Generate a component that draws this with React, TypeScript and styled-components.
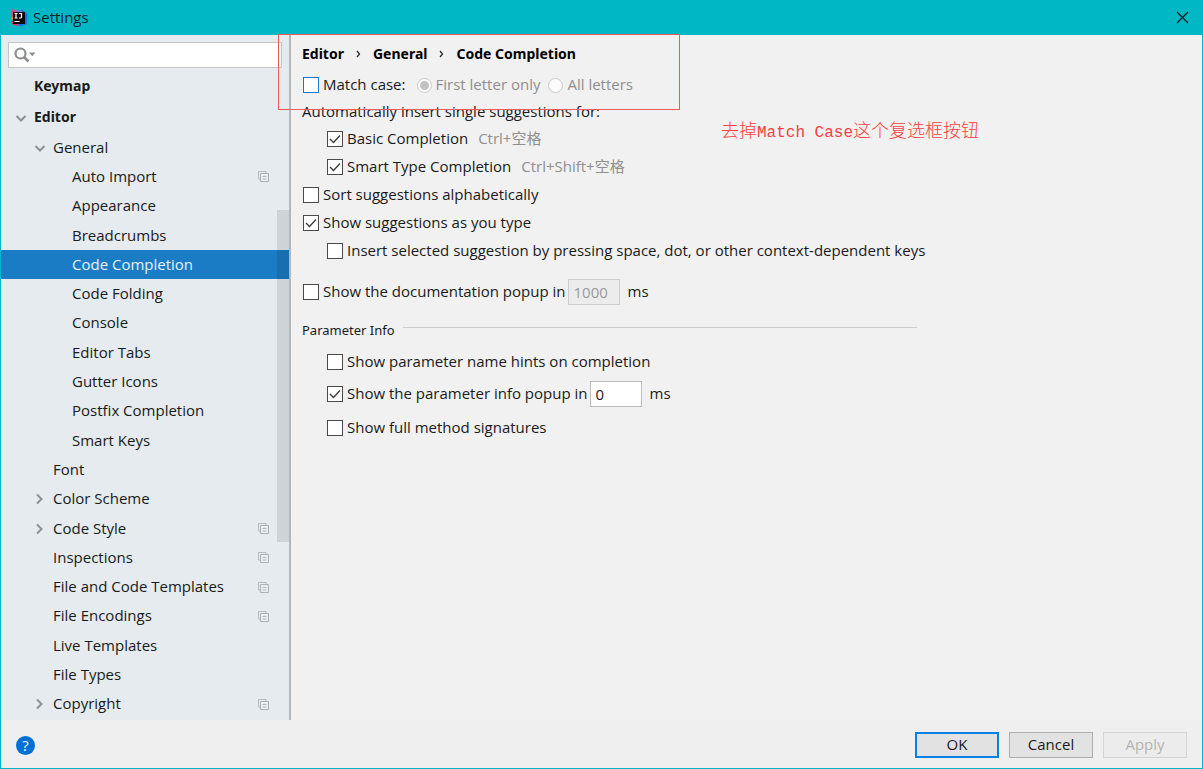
import React from "react";
import styled, { createGlobalStyle, css } from "styled-components";

const GlobalStyle = createGlobalStyle`
  *, *::before, *::after { box-sizing: border-box; }
  body {
    margin: 0;
    font-family: "Open Sans", "Noto Sans CJK SC", sans-serif;
    font-size: 15px;
    line-height: 20px;
    color: #1a1a1a;
  }
  input, button { font: inherit; color: inherit; margin: 0; }
`;

const Dialog = styled.div`
  display: flex;
  flex-direction: column;
  min-height: 100vh;
  border: 1px solid #00b7c6;
  border-top: 0;
  background: #f1f1f1;
`;

const TitleBar = styled.header`
  display: flex;
  align-items: center;
  gap: 5px;
  height: 35px;
  padding: 0 13px 0 9px;
  background: #00b7c6;
  color: #0a2226;
`;

const Title = styled.h1`
  flex: 1;
  margin: 0;
  padding-bottom: 2px;
  font-size: 15px;
  font-weight: 400;
`;

const CloseButton = styled.button`
  display: flex;
  padding: 0;
  border: 0;
  background: none;
`;

const Body = styled.div`
  display: flex;
  flex: 1;
`;

const Sidebar = styled.aside`
  position: relative;
  display: flex;
  flex-direction: column;
  flex: 0 0 290px;
  border-right: 2px solid #b4b7ba;
  background: #e5ebef;
`;

const SearchBox = styled.label`
  display: flex;
  align-items: center;
  height: 26px;
  margin: 7px 7px 3px;
  padding: 0 5px;
  border: 1px solid #c3c6c9;
  background: #fff;
`;

const SearchInput = styled.input`
  flex: 1;
  min-width: 0;
  border: 0;
  outline: 0;
  background: none;
`;

const Tree = styled.ul`
  display: flex;
  flex-direction: column;
  flex: 1;
  margin: 0;
  padding: 0 0 1px;
  list-style: none;
`;

const depthPadding = [12, 31, 50];

const TreeRow = styled.li<{ $depth: number; $selected?: boolean; $top?: boolean }>`
  display: flex;
  align-items: center;
  flex: 1 1 29px;
  padding: 0 20px 0 ${(p) => depthPadding[p.$depth]}px;
  ${(p) =>
    p.$top &&
    css`
      flex: 0 0 31px;
      font-family: "Noto Sans", sans-serif;
      font-size: 14px;
      font-weight: 700;
    `}
  ${(p) =>
    p.$selected &&
    css`
      background: #1a7cc4;
      color: #e8f2fa;
    `}
`;

const ArrowSlot = styled.span`
  display: flex;
  flex: 0 0 21px;
  padding-left: 2px;
`;

const RowLabel = styled.span`
  flex: 1;
  padding-bottom: 2px;
`;

const ScrollThumb = styled.div`
  position: absolute;
  top: 175px;
  right: 0;
  width: 12px;
  height: 332px;
  background: rgba(0, 0, 0, 0.1);
`;

const Content = styled.main`
  position: relative;
  flex: 1;
  padding: 1px 11px 16px;
`;

const Breadcrumbs = styled.nav`
  display: flex;
  align-items: center;
  gap: 12px;
  height: 36px;
  font-family: "Noto Sans", sans-serif;
  font-size: 14px;
  font-weight: 700;
  color: #000;
`;

const Intro = styled.p`
  margin: 0;
  line-height: 27px;
`;

const OptionRow = styled.div<{ $indent?: boolean; $gap?: number; $tight?: boolean }>`
  display: flex;
  align-items: center;
  height: ${(p) => (p.$tight ? 26 : 28)}px;
  margin-top: ${(p) => p.$gap ?? 0}px;
  padding-left: ${(p) => (p.$indent ? 25 : 1)}px;
`;

const OptionLabel = styled.label<{ $muted?: boolean }>`
  display: flex;
  align-items: center;
  gap: 4px;
  color: ${(p) => (p.$muted ? "#8f8f8f" : "inherit")};
`;

const OptionText = styled.span`
  padding-bottom: 2px;
`;

const Shortcut = styled.span`
  margin-left: 10px;
  padding-bottom: 2px;
  color: #8f8f8f;
`;

const BoxFrame = styled.span`
  display: grid;
  width: 16px;
  height: 16px;

  > * { grid-area: 1 / 1; }
  > svg { pointer-events: none; }
`;

const BoxInput = styled.input<{ $active?: boolean }>`
  appearance: none;
  width: 16px;
  height: 16px;
  border: 1px solid ${(p) => (p.$active ? "#0f7bd6" : "#4a4a4a")};
  background: #fff;
`;

const RadioInput = styled.input`
  appearance: none;
  width: 15px;
  height: 15px;
  border: 1px solid #cbcbcb;
  border-radius: 50%;
  background: #fbfbfb;

  &:checked { background: radial-gradient(circle, #c2c2c2 0 4px, #fbfbfb 5px); }
`;

const RadioGroup = styled.div`
  display: flex;
  gap: 8px;
  margin-left: 11px;
`;

const DelayInput = styled.input`
  width: 52px;
  height: 26px;
  margin: 0 8px 0 2px;
  padding: 0 5px 1px;
  border: 1px solid #bdbdbd;
  background: #fff;

  &:disabled {
    border-color: #cdcdcd;
    background: #ececec;
    color: #9a9a9a;
  }
`;

const SectionHeading = styled.h2`
  display: flex;
  align-items: center;
  gap: 8px;
  max-width: 615px;
  height: 28px;
  margin: 10px 0 4px;
  font-family: "Noto Sans", sans-serif;
  font-size: 13px;
  font-weight: 400;

  &::after {
    content: "";
    flex: 1;
    height: 1px;
    margin-bottom: 5px;
    background: #cfcfcf;
  }
`;

const Highlight = styled.div`
  position: absolute;
  top: -1px;
  left: -13px;
  width: 402px;
  height: 76px;
  border: 1px solid #ee5a5c;
  pointer-events: none;
`;

const Note = styled.p`
  position: absolute;
  top: 82px;
  left: 430px;
  margin: 0;
  font: 300 18px/24px "Noto Sans CJK SC", sans-serif;
  color: #f63f40;
  white-space: nowrap;
`;

const NoteCode = styled.span`
  font-family: "Liberation Mono", monospace;
  font-size: 16px;
  font-weight: 400;
`;

const Footer = styled.footer`
  display: flex;
  align-items: center;
  gap: 10px;
  height: 48px;
  padding: 2px 15px 0;
  background: #efefef;
`;

const HelpButton = styled.button`
  width: 19px;
  height: 19px;
  margin-right: auto;
  padding: 0;
  border: 0;
  border-radius: 50%;
  background: #0070d6;
  color: #fff;
  line-height: 19px;
`;

const FooterButton = styled.button<{ $primary?: boolean }>`
  width: 84px;
  height: 26px;
  padding: 0 0 2px;
  border: ${(p) => (p.$primary ? "2px solid #0a80e0" : "1px solid #adadad")};
  background: #e2e2e2;
  line-height: 20px;

  &:disabled {
    border-color: #d4d4d4;
    background: #ececec;
    color: #b4b4b4;
  }
`;

const AppIcon = () => (
  <svg width="18" height="18" viewBox="0 0 18 18" aria-hidden="true">
    <path d="M1.500 0L8 2 7 10 1.500 8z" fill="#e8436b" />
    <path d="M0.500 9L5 7v6z" fill="#fb8a2a" />
    <path d="M1 12l5-1 4 6-7-1z" fill="#d9356c" />
    <path d="M8 3l4-2.500L17.500 5l-.5 10-6 2.500-3-2z" fill="#1477e8" />
    <path d="M5 1l3 1 3-1 2 3H4z" fill="#8a6fc0" />
    <rect x="3" y="3" width="12" height="12" fill="#10070c" />
    <path
      d="M4.500 4.500h3M6 4.500v4.500M4.500 9h3M9 4.500h2.500v3.500q0 1-1 1H9M4.500 12.500h5"
      fill="none"
      stroke="#fff"
      strokeWidth="1.200"
    />
  </svg>
);

const CloseIcon = () => (
  <svg width="13" height="13" viewBox="0 0 13 13" aria-hidden="true">
    <path d="M1 1l11 11M12 1L1 12" stroke="#04191b" strokeWidth="1.200" />
  </svg>
);

const SearchIcon = () => (
  <svg width="23" height="16" viewBox="0 0 23 16" aria-hidden="true">
    <circle cx="6.500" cy="6.500" r="5" fill="none" stroke="#8b8d8f" strokeWidth="2.200" />
    <path d="M10 10l4.500 4.500" stroke="#8b8d8f" strokeWidth="2.600" />
    <path d="M15 5.500h6.500l-3.250 3.800z" fill="#8b8d8f" />
  </svg>
);

const CrumbIcon = () => (
  <svg width="5" height="8" viewBox="0 0 5 8" aria-hidden="true">
    <path d="M1 1l2.500 3L1 7" fill="none" stroke="#222" strokeWidth="1.200" />
  </svg>
);

const Arrow = ({ open }: { open?: boolean }) => (
  <svg width="12" height="12" viewBox="0 0 12 12" aria-hidden="true">
    <path
      d={open ? "M1.500 4L6 8.500l4.500-4.500" : "M3 1.500l4.500 4.500-4.500 4.500"}
      fill="none"
      stroke="#8e9194"
      strokeWidth="2"
    />
  </svg>
);

const CopyIcon = () => (
  <svg width="11" height="11" viewBox="0 0 11 11" aria-hidden="true">
    <path d="M2 8H.5V.5H8V2" fill="none" stroke="#b3bac0" />
    <path d="M2.500 2.500h8v8h-8z" fill="#e9eef1" stroke="#a9b1b7" />
    <path d="M4.500 5.500h4M4.500 8h4" stroke="#b3bac0" />
  </svg>
);

type CheckProps = {
  label: string;
  checked?: boolean;
  active?: boolean;
};

const Check = ({ label, checked, active }: CheckProps) => (
  <OptionLabel>
    <BoxFrame>
      <BoxInput type="checkbox" defaultChecked={checked} $active={active} />
      {checked && (
        <svg width="16" height="16" viewBox="0 0 16 16" aria-hidden="true">
          <path d="M3 8l3.500 3.500L13 4.500" fill="none" stroke="#3c3c3c" strokeWidth="1.400" />
        </svg>
      )}
    </BoxFrame>
    <OptionText>{label}</OptionText>
  </OptionLabel>
);

type Node = {
  label: string;
  depth: number;
  arrow?: "open" | "closed";
  copy?: boolean;
  selected?: boolean;
  top?: boolean;
};

const nodes: Node[] = [
  { label: "Keymap", depth: 0, top: true },
  { label: "Editor", depth: 0, top: true, arrow: "open" },
  { label: "General", depth: 1, arrow: "open" },
  { label: "Auto Import", depth: 2, copy: true },
  { label: "Appearance", depth: 2 },
  { label: "Breadcrumbs", depth: 2 },
  { label: "Code Completion", depth: 2, selected: true },
  { label: "Code Folding", depth: 2 },
  { label: "Console", depth: 2 },
  { label: "Editor Tabs", depth: 2 },
  { label: "Gutter Icons", depth: 2 },
  { label: "Postfix Completion", depth: 2 },
  { label: "Smart Keys", depth: 2 },
  { label: "Font", depth: 1 },
  { label: "Color Scheme", depth: 1, arrow: "closed" },
  { label: "Code Style", depth: 1, arrow: "closed", copy: true },
  { label: "Inspections", depth: 1, copy: true },
  { label: "File and Code Templates", depth: 1, copy: true },
  { label: "File Encodings", depth: 1, copy: true },
  { label: "Live Templates", depth: 1 },
  { label: "File Types", depth: 1 },
  { label: "Copyright", depth: 1, arrow: "closed", copy: true },
];

export default function App() {
  return (
    <>
      <GlobalStyle />
      <Dialog>
        <TitleBar>
          <AppIcon />
          <Title>Settings</Title>
          <CloseButton aria-label="Close">
            <CloseIcon />
          </CloseButton>
        </TitleBar>
        <Body>
          <Sidebar>
            <SearchBox>
              <SearchIcon />
              <SearchInput type="text" aria-label="Search settings" />
            </SearchBox>
            <Tree>
              {nodes.map((n) => (
                <TreeRow key={n.label} $depth={n.depth} $selected={n.selected} $top={n.top}>
                  <ArrowSlot>{n.arrow && <Arrow open={n.arrow === "open"} />}</ArrowSlot>
                  <RowLabel>{n.label}</RowLabel>
                  {n.copy && <CopyIcon />}
                </TreeRow>
              ))}
            </Tree>
            <ScrollThumb />
          </Sidebar>
          <Content>
            <Breadcrumbs aria-label="Breadcrumb">
              <span>Editor</span>
              <CrumbIcon />
              <span>General</span>
              <CrumbIcon />
              <span>Code Completion</span>
            </Breadcrumbs>
            <OptionRow $tight>
              <Check label="Match case:" active />
              <RadioGroup>
                <OptionLabel $muted>
                  <RadioInput type="radio" name="match" defaultChecked disabled />
                  <OptionText>First letter only</OptionText>
                </OptionLabel>
                <OptionLabel $muted>
                  <RadioInput type="radio" name="match" disabled />
                  <OptionText>All letters</OptionText>
                </OptionLabel>
              </RadioGroup>
            </OptionRow>
            <Intro>Automatically insert single suggestions for:</Intro>
            <OptionRow $indent>
              <Check label="Basic Completion" checked />
              <Shortcut>Ctrl+空格</Shortcut>
            </OptionRow>
            <OptionRow $indent>
              <Check label="Smart Type Completion" checked />
              <Shortcut>Ctrl+Shift+空格</Shortcut>
            </OptionRow>
            <OptionRow>
              <Check label="Sort suggestions alphabetically" />
            </OptionRow>
            <OptionRow>
              <Check label="Show suggestions as you type" checked />
            </OptionRow>
            <OptionRow $indent>
              <Check label="Insert selected suggestion by pressing space, dot, or other context-dependent keys" />
            </OptionRow>
            <OptionRow $gap={13}>
              <Check label="Show the documentation popup in" />
              <DelayInput aria-label="Documentation popup delay" defaultValue="1000" disabled />
              <OptionText>ms</OptionText>
            </OptionRow>
            <SectionHeading>Parameter Info</SectionHeading>
            <OptionRow $indent>
              <Check label="Show parameter name hints on completion" />
            </OptionRow>
            <OptionRow $indent $gap={4}>
              <Check label="Show the parameter info popup in" checked />
              <DelayInput aria-label="Parameter info popup delay" defaultValue="0" />
              <OptionText>ms</OptionText>
            </OptionRow>
            <OptionRow $indent $gap={6}>
              <Check label="Show full method signatures" />
            </OptionRow>
            <Highlight />
            <Note>
              去掉<NoteCode>Match Case</NoteCode>这个复选框按钮
            </Note>
          </Content>
        </Body>
        <Footer>
          <HelpButton aria-label="Help">?</HelpButton>
          <FooterButton $primary>OK</FooterButton>
          <FooterButton>Cancel</FooterButton>
          <FooterButton disabled>Apply</FooterButton>
        </Footer>
      </Dialog>
    </>
  );
}
